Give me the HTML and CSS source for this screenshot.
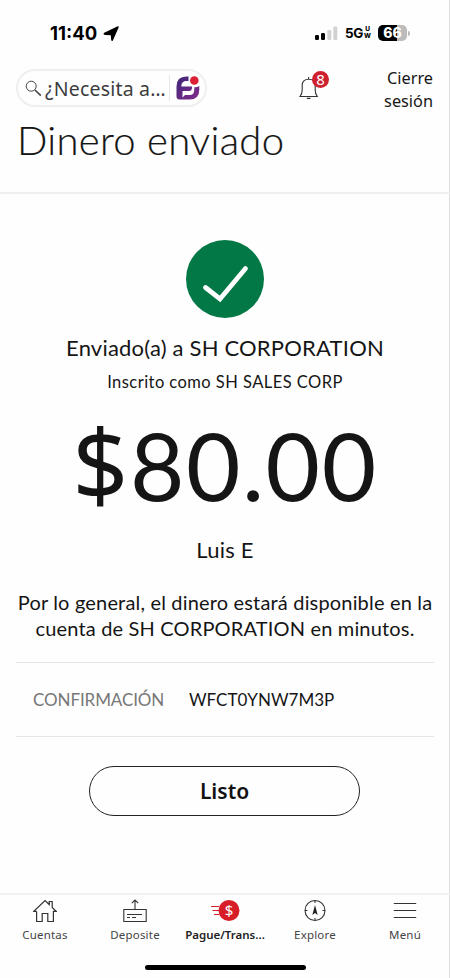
FILE: index.html
```html
<!DOCTYPE html>
<html lang="es">
<head>
<meta charset="utf-8">
<meta name="viewport" content="width=device-width, initial-scale=1">
<title>Dinero enviado</title>
<link rel="stylesheet" href="styles.css">
</head>
<body>
<div class="screen">
  <div class="status">
    <div class="clock"><span class="time">11:40</span>
      <svg class="arrow" width="17" height="17" viewBox="0 0 17 17"><path d="M1.200 7.800 14.200 1.400Q16.300.6 15.500 2.800L10 15.200Q8.800 17 8.200 15L7.800 10.200 2 10Q-.4 9.300 1.200 7.800Z"/></svg>
    </div>
    <div class="signals">
      <svg width="23" height="15" viewBox="0 0 23 15"><rect x="0" y="9" width="4" height="5" rx="1.2"/><rect x="6" y="7" width="4" height="7" rx="1.2"/><rect x="12.3" y="4" width="4" height="10" rx="1.2" fill="#d2d2d2"/><rect x="18.3" y="0.5" width="4" height="13.500" rx="1.2" fill="#d2d2d2"/></svg>
      <span class="net">5G</span><span class="uw"><span>U</span><span>W</span></span>
      <span class="battery">66</span><span class="nub"></span>
    </div>
  </div>

  <header class="header">
    <div class="search">
      <svg class="lens" width="17" height="17" viewBox="0 0 17 17" fill="none" stroke="#444"><circle cx="6.2" cy="6.2" r="5" stroke-width="1"/><path d="M10 10l5.800 5.600" stroke-width="1.600"/></svg>
      <span class="query">¿Necesita a…</span>
      <span class="split"></span>
      <svg class="fargo" width="26" height="26" viewBox="0 0 26 26">
        <defs><linearGradient id="g" gradientUnits="userSpaceOnUse" x1="2" y1="2" x2="24" y2="24"><stop offset="0" stop-color="#3f2678"/><stop offset="1" stop-color="#842b8c"/></linearGradient></defs>
        <path d="M13.500 1.500H11.500Q1.500 1.500 1.500 11.500V21.500Q1.500 24.500 4.500 24.500H14.500Q24.300 24.500 24.300 14.500V11Q22 12.500 19.300 12.200V14.500Q19.300 20 14.500 20H10L7.500 22.500V16H14Q17 16 17 12.500V11.500H6.300Q6.300 6 11.500 6H13.500Z" fill="url(#g)"/>
      <circle cx="19.300" cy="5.500" r="4.300" fill="#dc1f35"/>
      </svg>
    </div>
    <div class="bell">
      <svg width="20" height="24" viewBox="0 0 20 24" fill="none" stroke="#333" stroke-width="1.100"><path d="M1 20.500H18.300Q16.200 18 16.200 14V9.500Q16.200 3.200 9.700 3.200T3.200 9.500V14Q3.200 18 1 20.500ZM9.600 3V1M7.800 22.400H11.500"/></svg>
      <span class="badge">8</span>
    </div>
    <div class="logout">Cierre<br>sesión</div>
  </header>
  <h1 class="title">Dinero enviado</h1>

  <main class="main">
    <svg class="check" width="78" height="78" viewBox="0 0 78 78"><circle cx="39" cy="39" r="39" fill="#037847"/><path d="M19.500 47.500 34 59 59.500 28.500" fill="none" stroke="#fff" stroke-width="4.800" stroke-linecap="round" stroke-linejoin="miter"/></svg>
    <p class="sent">Enviado(a) a SH CORPORATION</p>
    <p class="alias">Inscrito como SH SALES CORP</p>
    <p class="amount"><span class="currency">$</span>80.00</p>
    <p class="sender">Luis E</p>
    <p class="note">Por lo general, el dinero estará disponible en la<br>cuenta de SH CORPORATION en minutos.</p>
    <dl class="confirm"><dt>CONFIRMACIÓN</dt><dd>WFCT0YNW7M3P</dd></dl>
    <button class="done">Listo</button>
  </main>

  <nav class="tabs">
    <div class="tab">
      <svg width="24" height="24" viewBox="0 0 24 24" fill="none" stroke="#333" stroke-width="1.200"><path d="M3.600 12.400V22.500H9.200V14.500H14.800V22.500H20.400V12.400H23.200L19.200 8.400V2.500H16.200V5.500L12 1.500.8 12.400H3.600"/></svg>
      <span>Cuentas</span>
    </div>
    <div class="tab">
      <svg width="24" height="24" viewBox="0 0 24 24" fill="none" stroke="#333" stroke-width="1.100"><path d="M.8 10.500H23.200V22.500H.8ZM12 10.500V1M8.800 4.200 12 1 15.200 4.200M4 15.500H19M4 18.500H7M9 18.500H13"/></svg>
      <span>Deposite</span>
    </div>
    <div class="tab active">
      <svg width="30" height="24" viewBox="0 0 30 24"><path d="M1 7.500H9M2.500 11.500H9M4 15.500H9" stroke="#d71e28" stroke-width="1.200"/><circle cx="19" cy="11.500" r="10.500" fill="#d71e28"/><text x="19" y="17" text-anchor="middle" class="dollar">$</text></svg>
      <span>Pague/Trans...</span>
    </div>
    <div class="tab">
      <svg width="24" height="24" viewBox="0 0 24 24" fill="none" stroke="#333" stroke-width="1.100"><circle cx="12" cy="11.500" r="10"/><path d="M12 1.500V4M12 19V21.500M2 11.500H4.500M19.500 11.500H22"/><path d="M12 6 9.300 16 12 14 14.700 16Z" fill="#222" stroke="none"/></svg>
      <span>Explore</span>
    </div>
    <div class="tab">
      <svg width="24" height="24" viewBox="0 0 24 24" stroke="#333" stroke-width="1.100"><path d="M.8 4.500H23.200M.8 11.500H23.200M.8 18.500H23.200"/></svg>
      <span>Menú</span>
    </div>
  </nav>
  <div class="home"></div>
</div>
</body>
</html>
```

FILE: styles.css
```css
* { box-sizing: border-box; margin: 0; padding: 0; }
body { background: #fefefe; font-family: Lato, "Noto Sans", sans-serif; color: #151515; }
svg { display: block; flex: none; }
.screen { width: 450px; height: 978px; overflow: hidden; display: flex; flex-direction: column; box-shadow: inset -1px 0 #dedede; }
.status { height: 66px; padding: 0 40px 0 50px; display: flex; justify-content: space-between; align-items: center; font-family: Inter, sans-serif; color: #000; }
.clock { display: flex; align-items: center; gap: 4px; }
.time { font-size: 18.500px; font-weight: 700; width: 49px; }
.signals { display: flex; align-items: center; }
.net { margin-left: 7px; font-size: 13.500px; font-weight: 700; letter-spacing: -.3px; }
.uw { display: flex; flex-direction: column; font-size: 6.500px; line-height: 7px; font-weight: 800; align-items: center; margin: 0 7px 0 1px; }
.battery { width: 29px; height: 16px; border-radius: 5px; background: linear-gradient(90deg, #000 66%, #bcbcbc 66%); color: #fff; font-size: 14px; line-height: 16px; font-weight: 800; text-align: center; }
.nub { width: 2px; height: 5px; margin-left: 1px; border-radius: 0 2px 2px 0; background: #bcbcbc; }
.header { height: 50px; padding: 0 17px 0 16px; display: flex; align-items: flex-start; }
.search { width: 191px; height: 38px; margin-top: 3px; padding-left: 7px; border: 2px solid #efefef; border-radius: 19px; display: flex; align-items: center; }
.query { margin-left: 3px; font: 19.500px "Noto Sans", sans-serif; color: #3c3c3c; white-space: nowrap; width: 121px; letter-spacing: .2px; }
.split { width: 1px; height: 26px; background: #e8e8e8; margin: 0 5px 0 3px; }
.bell { position: relative; margin: 10px 0 0 92px; width: 20px; }
.badge { position: absolute; left: 13px; top: -5px; width: 17px; height: 17px; border-radius: 50%; background: #cf2030; color: #fff; font: 15px/17px "Noto Sans", sans-serif; text-align: center; }
.logout { margin: 1px 0 0 auto; font: 16.300px/22.500px "Noto Sans", sans-serif; text-align: right; }
.title { height: 78px; padding-left: 17px; border-bottom: 2px solid #efefef; font-size: 40px; line-height: 48px; font-weight: 300; letter-spacing: .3px; -webkit-text-stroke: .2px #151515; }
.main { flex: 1; display: flex; flex-direction: column; align-items: center; }
.check { margin-top: 46px; }
.sent { margin-top: 16px; font-size: 22px; line-height: 28px; white-space: nowrap; letter-spacing: .2px; }
.alias { margin-top: 10px; font-size: 16.500px; line-height: 20px; white-space: nowrap; letter-spacing: .45px; }
.amount { margin-top: 21px; font-size: 94px; line-height: 104px; letter-spacing: 1.500px; white-space: nowrap; }
.currency { font-family: "Noto Sans", sans-serif; font-size: 98px; line-height: 1; }
.sender { margin-top: 18px; font-size: 22px; line-height: 30px; letter-spacing: .2px; }
.note { margin-top: 24px; font-size: 20px; line-height: 26px; text-align: center; white-space: nowrap; letter-spacing: .17px; }
.confirm { width: 418px; height: 75px; margin-top: 21px; padding-left: 17px; border-top: 1px solid #e6e6e6; border-bottom: 1px solid #e6e6e6; display: flex; align-items: center; font-size: 17px; }
.confirm dt { width: 156px; color: #777; letter-spacing: -.1px; }
.done { width: 271px; height: 50px; margin: 29px 1px 0 0; border: 1px solid #222; border-radius: 25px; background: transparent; font: 600 21px "Noto Sans", sans-serif; color: #111; }
.tabs { height: 72px; flex: none; border-top: 2px solid #f1f1f1; display: grid; grid-template-columns: repeat(5, 90px); padding-top: 4px; }
.tab { display: flex; flex-direction: column; align-items: center; gap: 4px; font: 11.500px/16px "Noto Sans", sans-serif; color: #444; letter-spacing: .2px; white-space: nowrap; }
.active { font-weight: 600; color: #222; letter-spacing: 0; }
.dollar { font: 15px "Noto Sans", sans-serif; fill: #fff; }
.home { width: 161px; height: 5px; flex: none; margin: 0 auto 8px; border-radius: 3px; background: #000; }
```
